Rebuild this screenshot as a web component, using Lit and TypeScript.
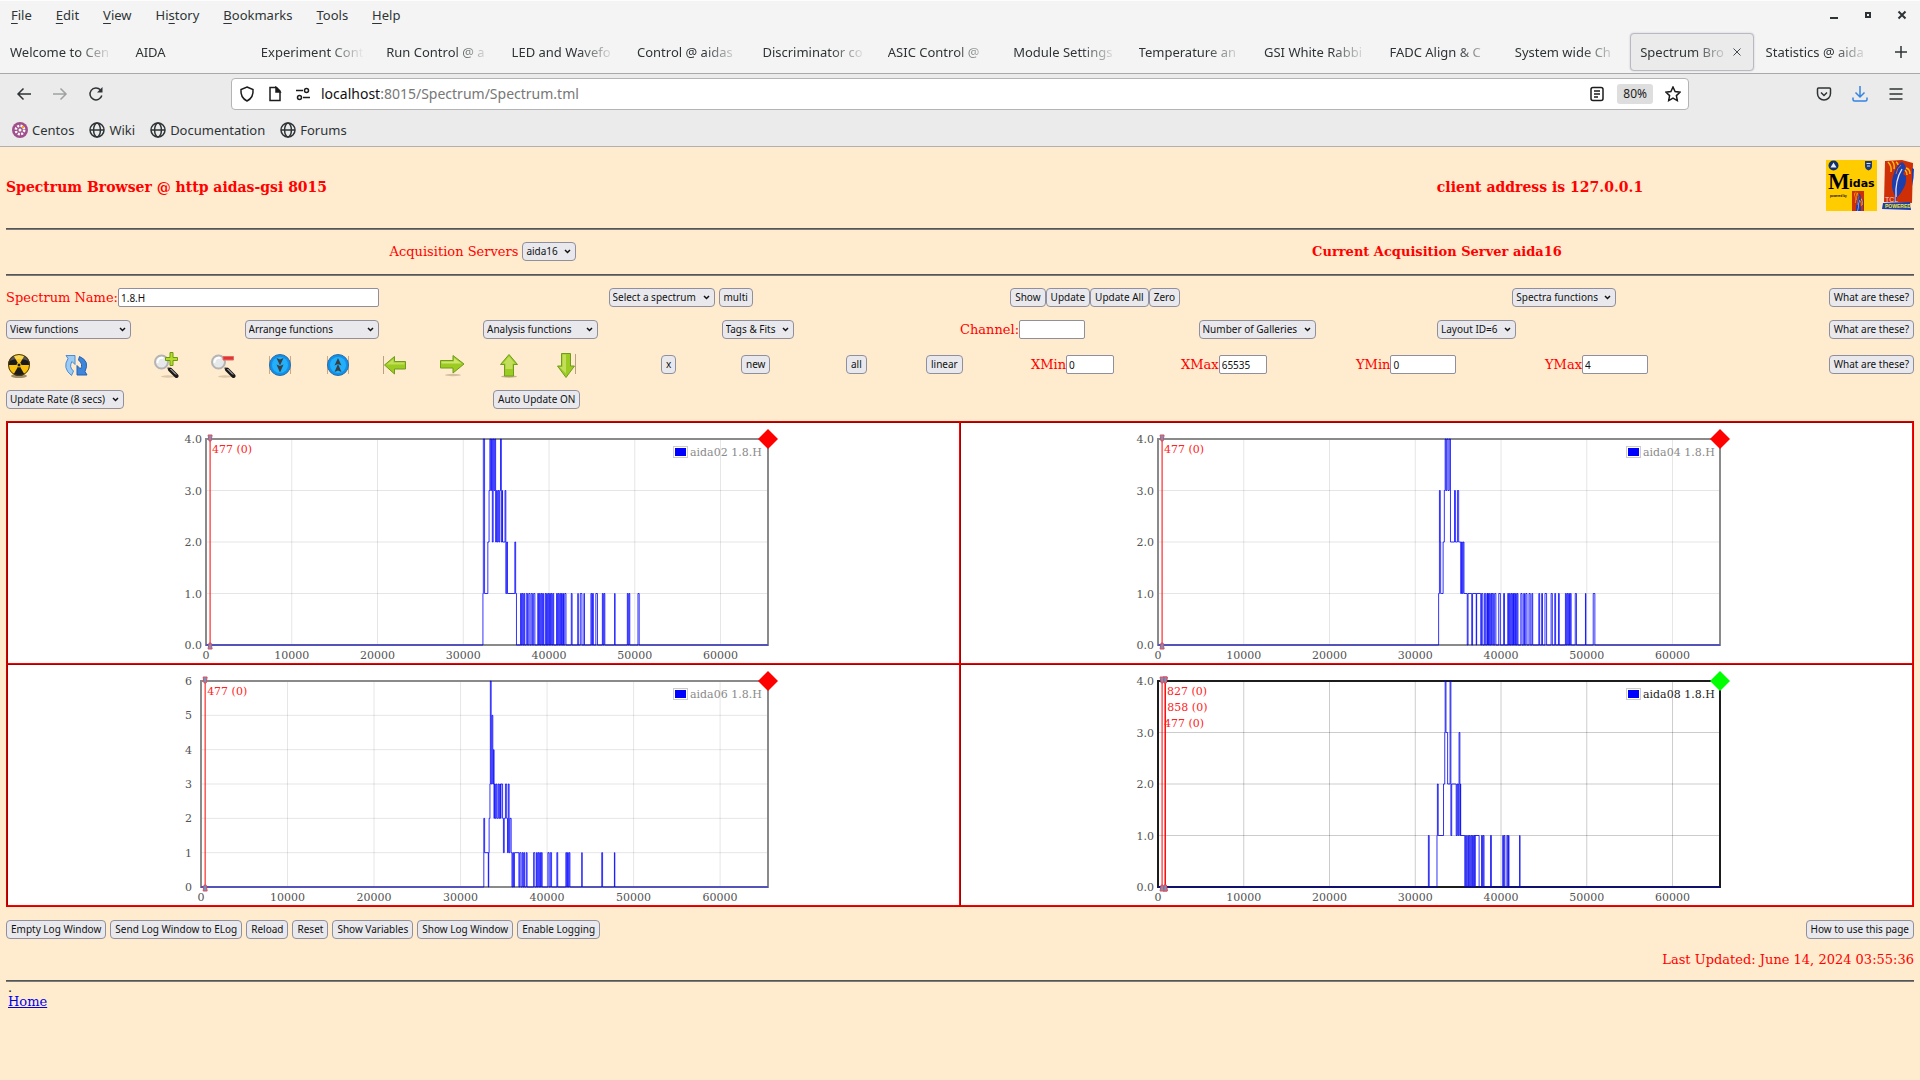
import { LitElement, html, svg, css, nothing } from "lit";
import { customElement, property } from "lit/decorators.js";

/** [bin, level] moves the trace to a level; [from, to, low, high, pitch?] is a burst between two levels. */
type Segment = number[];

interface Spectrum {
  name: string;
  active?: boolean;
  left: number;
  right: number;
  labelGap: number;
  max: number;
  decimals: number;
  firstBin: number;
  binWidth: number;
  cursors: number[];
  segments: Segment[];
}

const hit = (from: number, to: number): Segment[] => [[from, 1], [to, 0]];
const burst = (from: number, to: number, pitch = 2): Segment => [from, to, 0, 1, pitch];

const SPECTRA: Spectrum[] = [
  {
    name: "aida02 1.8.H", left: 38, right: 600, labelGap: 4, max: 4, decimals: 1,
    firstBin: 113, binWidth: 47.7, cursors: [477],
    segments: [
      [790, 1], [791, 4], [794, 1], [802, 2], [805, 3], [807, 4], [809, 3], [811, 4], [813, 2],
      [815, 4], [817, 3], [819, 4], [821, 2], [823, 3], [825, 2], [827, 3], [829, 2], [831, 3],
      [833, 4], [835, 2], [837, 3], [838, 2], [844, 3], [846, 1], [848, 2], [850, 1], [868, 2],
      [870, 1], [872, 0],
      burst(882, 894), burst(896, 905, 3), burst(908, 920, 3), burst(924, 938), burst(942, 947),
      burst(949, 965), burst(970, 976), burst(978, 987), ...hit(990, 993), ...hit(1006, 1008),
      ...hit(1022, 1023), ...hit(1028, 1032), ...hit(1037, 1038), burst(1054, 1060), ...hit(1066, 1070),
      burst(1082, 1089), ...hit(1112, 1113), burst(1143, 1149), ...hit(1169, 1172),
    ],
  },
  {
    name: "aida04 1.8.H", left: 37, right: 599, labelGap: 4, max: 4, decimals: 1,
    firstBin: 94, binWidth: 47.7, cursors: [477],
    segments: [
      [780, 1], [782, 3], [784, 2], [785, 1], [788, 1], [791, 2], [794, 3], [796, 4],
      [798, 3], [800, 4], [803, 3], [806, 4], [809, 2], [819, 3], [821, 2], [826, 3], [829, 2],
      [832, 842, 1, 2, 2], [842, 1], [850, 0], [852, 1], [861, 0], [863, 1], [872, 0], [873, 1],
      [883, 0], [885, 1], [888, 0],
      burst(892, 900, 3), burst(900, 910), burst(911, 921, 3), ...hit(927, 931), ...hit(939, 941),
      burst(949, 963), burst(964, 974), ...hit(981, 984), ...hit(988, 990), ...hit(993, 996),
      ...hit(1001, 1004), ...hit(1008, 1010), burst(1025, 1029), burst(1032, 1036), ...hit(1040, 1044),
      ...hit(1055, 1058), burst(1064, 1068), ...hit(1073, 1075), burst(1090, 1104), ...hit(1114, 1117),
      ...hit(1139, 1140), ...hit(1158, 1162),
    ],
  },
  {
    name: "aida06 1.8.H", left: 33, right: 600, labelGap: 9, max: 6, decimals: 0,
    firstBin: 99, binWidth: 47.17, cursors: [477],
    segments: [
      [792, 2], [794, 1], [803, 0], [804, 1], [805, 2], [807, 3], [808, 6], [810, 3], [812, 5],
      [814, 3], [816, 4], [817, 2], [818, 826, 2, 3, 2], [827, 3], [829, 2], [831, 3], [833, 2],
      [834, 3], [838, 2], [840, 1], [842, 2], [845, 3], [848, 2], [850, 1], [852, 3], [854, 1],
      [856, 2], [859, 1], [861, 0], [863, 1], [865, 0], [867, 1], [878, 0], [880, 1], [883, 0],
      burst(886, 894), ...hit(896, 898), ...hit(914, 917), burst(921, 935), ...hit(949, 952),
      ...hit(955, 958), ...hit(971, 973), burst(993, 1004), ...hit(1032, 1033), ...hit(1081, 1083),
      ...hit(1112, 1113),
    ],
  },
  {
    name: "aida08 1.8.H", active: true, left: 37, right: 599, labelGap: 4, max: 4, decimals: 1,
    firstBin: 94, binWidth: 47.7, cursors: [827, 858, 477],
    segments: [
      [755, 1], [757, 0], [776, 1], [777, 2], [779, 1], [792, 2], [795, 3], [796, 800, 3, 4, 2],
      [802, 2], [808, 4], [810, 1], [812, 2], [823, 1], [825, 2], [827, 1], [829, 2], [830, 3],
      [832, 1], [833, 2], [834, 1], [844, 0], [846, 1], [848, 0],
      burst(851, 869), [869, 1], [879, 0], burst(885, 893), ...hit(907, 909), ...hit(937, 938),
      ...hit(940, 942), burst(947, 952), ...hit(978, 979),
    ],
  },
];

@customElement("spectrum-plot")
class SpectrumPlot extends LitElement {
  @property({ attribute: false }) spectrum!: Spectrum;

  static styles = css`
    :host { display: block; width: 631px; max-width: 100%; }
    svg { display: block; width: 100%; height: auto; }
    text { font: 11px "DejaVu Serif", "Liberation Serif", serif; fill: #545454; }
    .grid { stroke: #000; stroke-opacity: 0.1; stroke-width: 1; }
    .frame { fill: none; stroke: #8a8a8a; stroke-width: 2; }
    .trace { fill: none; stroke: #00f; stroke-opacity: 0.8; stroke-width: 1; }
    .swatch-box { fill: #fff; stroke: #ccc; }
    .swatch { fill: #00f; }
    .cursor { stroke: #f00; stroke-width: 1; }
    .handle { fill: #6a9ac4; stroke: #e04a5e; stroke-width: 1; }
    .cursor-label { fill: #f22; }
    .legend { fill: #8a8a8a; }
    .flag { fill: #f00; }
    .active .grid { stroke-opacity: 0.2; }
    .active .frame { stroke: #1c1c1c; }
    .active .legend { fill: #222; }
    .active .flag { fill: #0f0; }
    .active .trace { stroke: #0000f0; }
  `;

  private readonly top = 16;
  private readonly bottom = 222;

  private x(channel: number) {
    const s = this.spectrum;
    return s.left + (channel / 65535) * (s.right - s.left);
  }

  private y(level: number) {
    return this.bottom - (level / this.spectrum.max) * (this.bottom - this.top);
  }

  private trace() {
    const s = this.spectrum;
    let d = `M${s.left} ${this.bottom}`;
    const step = (bin: number, level: number) => {
      d += `H${this.x((bin - s.firstBin) * s.binWidth).toFixed(2)}V${this.y(level).toFixed(2)}`;
    };
    for (const seg of s.segments) {
      if (seg.length === 2) {
        step(seg[0], seg[1]);
        continue;
      }
      const [from, to, low, high, pitch = 2] = seg;
      let up = true;
      for (let b = from; b < to; b += pitch) {
        step(b, up ? high : low);
        up = !up;
      }
      step(to, low);
    }
    return `${d}H${s.right}`;
  }

  render() {
    const s = this.spectrum;
    const ticksX = [0, 1, 2, 3, 4, 5, 6].map((n) => n * 10000);
    const ticksY = Array.from({ length: s.max + 1 }, (_, n) => n);
    return html`
      <svg viewBox="0 0 631 240" role="img" aria-label=${s.name} class=${s.active ? "active" : "dimmed"}>
        ${ticksX.slice(1).map((v) => svg`<line class="grid" x1=${this.x(v)} x2=${this.x(v)} y1=${this.top} y2=${this.bottom}></line>`)}
        ${ticksY.slice(1, -1).map((v) => svg`<line class="grid" x1=${s.left} x2=${s.right} y1=${this.y(v)} y2=${this.y(v)}></line>`)}
        <rect class="frame" x=${s.left} y=${this.top} width=${s.right - s.left} height=${this.bottom - this.top}></rect>
        <path class="trace" d=${this.trace()}></path>
        ${ticksX.map((v) => svg`<text x=${this.x(v)} y="236" text-anchor="middle">${v}</text>`)}
        ${ticksY.map((v) => svg`<text x=${s.left - s.labelGap} y=${this.y(v) + 4} text-anchor="end">${v.toFixed(s.decimals)}</text>`)}
        ${s.cursors.map((c, i) => {
          const cx = this.x(c);
          return svg`
            <line class="cursor" x1=${cx} x2=${cx} y1=${this.top} y2=${this.bottom}></line>
            <path class="handle" d="M${cx - 2} 12h4l-1 6h-2z"></path>
            <path class="handle" d="M${cx - 2} 226h4l-1 -6h-2z"></path>
            <text class="cursor-label" x=${cx + 2} y=${30 + i * 16}>${c} (0)</text>`;
        })}
        <rect class="swatch-box" x="505.500" y="23.500" width="14" height="11"></rect>
        <rect class="swatch" x="507" y="25" width="11" height="8"></rect>
        <text class="legend" x="522" y="33">${s.name}</text>
        <path class="flag" d="M${s.right} 6l10 10l-10 10l-10 -10z"></path>
      </svg>`;
  }
}

const chromeIcon = (body: unknown, label: string, cls = "") =>
  html`<svg class="glyph ${cls}" viewBox="0 0 16 16" role="img" aria-label=${label}>${body}</svg>`;

const GLYPH = {
  back: svg`<path d="M15 8H2M7.500 2.500L2 8l5.500 5.500"></path>`,
  forward: svg`<path d="M1 8h13M8.500 2.500L14 8l-5.500 5.500"></path>`,
  reload: svg`<path d="M13.800 9.500A6 6 0 1 1 12.400 3.800"></path><path d="M14.500 1v5.500H9z" fill="currentColor" stroke="none"></path>`,
  shield: svg`<path d="M8 1L14 3.500C14.500 8.500 12 13 8 15C4 13 1.500 8.500 2 3.500z"></path>`,
  page: svg`<path d="M3 1.500h6.500L13 5v9.500H3z"></path><path d="M9 1.500V6h4z" fill="currentColor"></path>`,
  perms: svg`<path d="M1 4.500h7M15 11.500H8"></path><circle cx="11.500" cy="4.500" r="2"></circle><circle cx="4.500" cy="11.500" r="2"></circle>`,
  reader: svg`<rect x="2" y="1.500" width="12" height="13" rx="2"></rect><path d="M5 5h6M5 8h6M5 11h4"></path>`,
  star: svg`<path d="M8 1l2.100 4.600 4.900.6-3.600 3.400.9 5L8 12.200l-4.300 2.400.9-5L1 6.200l4.900-.6z"></path>`,
  pocket: svg`<path d="M2.500 2h11q1 0 1 1v4.500a6.500 6.500 0 0 1-13 0V3q0-1 1-1z"></path><path d="M5 6.500l3 3 3-3"></path>`,
  download: svg`<path d="M8 0v10.500M3.500 6.500L8 11l4.500-4.500M1 11.500v2q0 1.500 1.500 1.500h11q1.500 0 1.500-1.500v-2"></path>`,
  menu: svg`<path d="M1.500 3h13M1.500 8h13M1.500 13h13"></path>`,
  close: svg`<path d="M4 4l8 8M12 4l-8 8"></path>`,
  plus: svg`<path d="M8 2v12M2 8h12"></path>`,
  globe: svg`<circle cx="8" cy="8" r="7"></circle><ellipse cx="8" cy="8" rx="3.400" ry="7"></ellipse><path d="M1 8h14"></path>`,
  centos: svg`<circle cx="8" cy="8" r="8" fill="#a14f8c" stroke="none"></circle><circle cx="8" cy="8" r="4.200" stroke="#fff" stroke-width="2.500" stroke-dasharray="2 1.300"></circle><circle cx="8" cy="8" r="1.500" fill="#fff" stroke="none"></circle><circle cx="11" cy="5" r="1.300" fill="#f5a623" stroke="none"></circle>`,
  minimise: svg`<path d="M4 11h8" stroke-width="2"></path>`,
  maximise: svg`<rect x="6" y="6" width="4" height="4" stroke-width="2"></rect>`,
  quit: svg`<path d="M4.500 4.500l7 7M11.500 4.500l-7 7" stroke-width="2"></path>`,
};

const ARROW_FILL = "#9ccb22";
const ARROW_EDGE = "#6f9c1c";

const lens = svg`
  <ellipse cx="15" cy="24.500" rx="7" ry="1.200" fill="#dcc8a6"></ellipse>
  <path d="M14.500 15.500l2.500 2.500" stroke="#8a8a8a" stroke-width="2"></path>
  <path d="M17 17.500l6.500 6.500" stroke="#1a1a1a" stroke-width="4" stroke-linecap="round"></path>
  <path d="M17.500 17l5.500 5.500" stroke="#e4e4e4" stroke-width="1"></path>
  <circle cx="8.500" cy="10" r="6.500" fill="#e6e8ea" stroke="#b4b4b4" stroke-width="2"></circle>
  <path d="M4.500 11a4.500 4.500 0 0 1 6-5" fill="none" stroke="#fff" stroke-width="2"></path>`;

const disc = svg`
  <path d="M2.500 4v18M23.500 4v18" stroke="#c9a98a" stroke-width="1"></path>
  <circle cx="13" cy="13" r="10.500" fill="#128fe8" stroke="#2c6ea8" stroke-width="1"></circle>
  <circle cx="13" cy="13" r="8" fill="#22b0fa"></circle>`;

const TOOLS: { label: string; body: unknown }[] = [
  {
    label: "Clear spectra",
    body: svg`
      <ellipse cx="13" cy="24" rx="8" ry="2" fill="#a08c68"></ellipse>
      <circle cx="13" cy="13" r="11" fill="#f9c00e"></circle>
      <path d="M13 13L7.500 3.500a11 11 0 0 1 11 0z" fill="#f9c81e"></path>
      <path d="M13 13L2 13A11 11 0 0 1 7.500 3.500z" fill="#1b1b1b"></path>
      <path d="M13 13L24 13A11 11 0 0 0 18.500 3.500z" fill="#1b1b1b"></path>
      <path d="M13 13L7.500 22.500a11 11 0 0 0 11 0z" fill="#1b1b1b"></path>
      <path d="M3 9a11 11 0 0 1 20 0q-10 -4 -20 0z" fill="#fff" fill-opacity="0.250"></path>
      <circle cx="13" cy="13" r="2" fill="#1b1b1b" stroke="#f9c00e" stroke-width="1"></circle>
      <circle cx="13" cy="13" r="10.500" fill="none" stroke="#4a3c14" stroke-width="1"></circle>`,
  },
  {
    label: "Refresh",
    body: svg`
      <path d="M8.500 23.500Q-1 16 5 6.500L3 3.500H12V12.500L9 9.500Q5.500 15 10.500 19z" fill="#9ccbf4" stroke="#4b8cd4" stroke-width="1"></path>
      <path d="M16.500 4.500Q27 9 22 19.500L24 23H14V13.500L17.500 17Q20.500 12 15.500 8z" fill="#3d86dc" stroke="#2462b4" stroke-width="1"></path>`,
  },
  { label: "Zoom in", body: svg`${lens}<path d="M17 0.500h3v5h4.500v3H20v5h-3v-5h-4.500v-3H17z" fill="#b4dc28" stroke="#6b9a10" stroke-width="1"></path>` },
  { label: "Zoom out", body: svg`${lens}<path d="M13 4.500h10.500v3.500h-10.500z" fill="#ee2f2f" stroke="#d8706a" stroke-width="1"></path>` },
  { label: "Scroll down", body: svg`${disc}<path d="M9.500 6l3.500 1.500 3.500 -1.500-3.500 7.500zM9.500 12.500l3.500 1.500 3.500 -1.500-3.500 8z" fill="#3a3f44"></path>` },
  { label: "Scroll up", body: svg`${disc}<path d="M9.500 13.500l3.500 -1.500 3.500 1.500-3.500 -7.500zM9.500 20l3.500 -1.500 3.500 1.500-3.500 -8z" fill="#3a3f44"></path>` },
  {
    label: "Left",
    body: svg`
      <path d="M1.500 4v18" stroke="#b9a080" stroke-width="1"></path>
      <path d="M23.500 9.500H12.500V4.500L2.500 13l10 9v-5H23.500z" fill=${ARROW_FILL} stroke=${ARROW_EDGE} stroke-width="1"></path>
      <path d="M22.500 10.500H11.500V7L4.500 12.500H22.500z" fill="#c2de5a"></path>`,
  },
  {
    label: "Right",
    body: svg`
      <ellipse cx="14" cy="23" rx="8" ry="1.200" fill="#d2bf9e"></ellipse>
      <path d="M1.500 8.500h12.500V3.500L25 12l-11 9v-5H1.500z" fill=${ARROW_FILL} stroke=${ARROW_EDGE} stroke-width="1"></path>
      <path d="M2.500 9.500h12.500V6L22.500 11.500H2.500z" fill="#cfe66e"></path>`,
  },
  {
    label: "Up",
    body: svg`
      <ellipse cx="13" cy="24.500" rx="8" ry="1.200" fill="#c2b08e"></ellipse>
      <path d="M8.500 24V12.500H4.500L13 2.500l8.500 10h-4V24z" fill=${ARROW_FILL} stroke=${ARROW_EDGE} stroke-width="1"></path>
      <path d="M9.500 17v-5.500H7L13 4.500l6 7h-2.500V17z" fill="#c2de5a"></path>`,
  },
  {
    label: "Down",
    body: svg`
      <path d="M22.500 2v20" stroke="#b9a080" stroke-width="1"></path>
      <path d="M8.500 1.500V14H4.500l8.500 11.500L21.500 14h-4V1.500z" fill=${ARROW_FILL} stroke=${ARROW_EDGE} stroke-width="1"></path>
      <path d="M9.500 2.500h3.500v19L6.500 15h3z" fill="#c2de5a"></path>`,
  },
];

const feather = svg`
  <path d="M3 1L20 0L31 3L30 43L2 42z" fill="#cf2f06"></path>
  <path d="M12 41L13 36Q8 27 11 16Q14 5 20 2Q25 5 23 11L21 14L24 16Q25 24 20 31Q17 36 15 37L14 42z" fill="#1d3fae"></path>
  <path d="M14 37Q13 20 20 9" fill="none" stroke="#e8e4f4" stroke-width="1.300"></path>
  <path d="M14 14Q15 8 19 5" fill="none" stroke="#d86048" stroke-width="1"></path>
  <path d="M6 2Q10 6 9 12M10 1Q13 4 12 9M14 2Q16 3 16 5M24 8Q28 9 28 14M23 10Q25 12 25 15" fill="none" stroke="#f7b81b" stroke-width="1.500"></path>
  <path d="M30 8L32 9Q32 18 30 26z" fill="#1d3fae"></path>`;

const TABS = [
  "Welcome to Cen", "AIDA", "Experiment Cont", "Run Control @ a", "LED and Wavefo", "Control @ aidas",
  "Discriminator co", "ASIC Control @", "Module Settings", "Temperature an", "GSI White Rabbi",
  "FADC Align & C", "System wide Ch", "Spectrum Bro", "Statistics @ aida",
];
const CURRENT_TAB = 13;

@customElement("app-root")
class AppRoot extends LitElement {
  static styles = css`
    :host {
      display: flex; flex-direction: column; min-height: 100vh; box-sizing: border-box;
      background: #ffebcd; color: #2e3436;
      --ui: "Noto Sans", "Open Sans", sans-serif;
      --page: "DejaVu Serif", "Liberation Serif", serif;
    }
    *, *::before, *::after { box-sizing: border-box; }
    button, input, select { font: inherit; color: inherit; margin: 0; }

    /* browser frame */
    .browser { font: 13px/18px var(--ui); }
    .head { background: #f4f4f4; border-top: 1px solid #fdfdfd; border-bottom: 1px solid #a9a9a9; }
    .menubar { display: flex; align-items: center; height: 28px; padding: 0 10px 0 11px; gap: 24px; }
    .menubar button, .plain { background: none; border: 0; padding: 0; cursor: default; }
    .menubar u { text-underline-offset: 3px; }
    .window-buttons { display: flex; gap: 18px; margin-left: auto; }
    .plain { display: flex; align-items: center; justify-content: center; }
    .tabs { display: grid; grid-template-columns: repeat(15, minmax(0, 1fr)) 39px; height: 44px; padding: 4px 0 2px; }
    .tab { display: flex; align-items: center; margin-right: 2px; padding: 0 9px; border: 1px solid transparent; border-radius: 4px; background: none; text-align: left; }
    .tab-text { flex: 1; min-width: 0; overflow: hidden; white-space: nowrap; mask-image: linear-gradient(to left, transparent, #000 36px); }
    .tab.current { background: #ebebeb; border-color: #b9b9c1; box-shadow: 0 0 2px #c4c4cc; }
    .glyph { width: 16px; height: 16px; display: block; flex: none; fill: none; stroke: currentColor; stroke-width: 1.500; }
    .tab .glyph { width: 14px; height: 14px; stroke-width: 1; }
    .nav { display: flex; align-items: center; height: 40px; background: #ebebeb; }
    .nav-side { display: flex; align-items: center; width: 231px; gap: 20px; padding: 0 16px; }
    .nav-side.end { justify-content: flex-end; }
    .faded { opacity: 0.400; }
    .blue { color: #3584e4; }
    .address { flex: 1; display: flex; align-items: center; height: 32px; padding: 0 7px; border: 1px solid #b4b4b4; border-radius: 4px; background: #fff; gap: 12px; color: #1c1c1c; }
    .url { flex: 1; min-width: 0; margin-left: -2px; font-size: 14px; color: #111; }
    .url span { color: #777; }
    .zoom { height: 20px; padding: 0 6px; border: 0; border-radius: 3px; background: #dedede; font-size: 12px; line-height: 20px; }
    .bookmarks { display: flex; align-items: center; gap: 15px; height: 33px; padding: 0 12px; background: #ebebeb; border-bottom: 1px solid #b0b0b0; }
    .bookmarks a { display: flex; align-items: center; gap: 4px; color: inherit; text-decoration: none; }

    /* page */
    main { padding: 0 6px; font: 13px/15px var(--page); color: #f00; }
    hr { height: 2px; margin: 0; border: 0; border-top: 1px solid #555; background: #7b7b7b; }
    h1, h2 { margin: 0; padding-top: 2px; font-size: 14px; line-height: 18px; font-weight: bold; }
    h3 { margin: 0; font-size: 13px; line-height: 15px; }
    .title { display: grid; grid-template-columns: 24fr 11fr auto; align-items: center; padding: 13px 0 17px; }
    .title h2 { text-align: center; }
    .logos { display: flex; gap: 5px; }
    .logos svg { display: block; height: 51px; }
    .servers { display: grid; grid-template-columns: 1fr 1fr; align-items: center; justify-items: center; height: 44px; padding-bottom: 2px; }
    .field, .group { display: flex; align-items: center; }
    .field.spaced, .group.spaced { gap: 4px; }
    .row { display: grid; align-items: center; justify-items: start; }
    .row > .last { justify-self: end; }
    .row-name { grid-template-columns: 6fr 4fr 5fr 2fr 2fr; height: 31px; margin-top: 6px; }
    .row-functions { grid-template-columns: repeat(8, 1fr); height: 33px; }
    .row-tools { grid-template-columns: 57fr 90fr 57fr 57fr 58fr 57fr 57fr 57fr 57fr 108fr 80fr 105fr 80fr 105fr 150fr 175fr 189fr 184fr 185fr; height: 37px; }
    .row-tools > * { min-width: 0; white-space: nowrap; }
    .row-update { grid-template-columns: 487fr 1421fr; height: 33px; }
    .btn, .box, .pick select { height: 19px; font: 10px/15px var(--ui); color: #111; border: 1px solid #8f8f9d; }
    .btn { padding: 0 4px; border-radius: 4px; background: #e9e9ed; white-space: nowrap; }
    .pick { display: inline-grid; align-items: center; }
    .pick select, .pick svg { grid-area: 1 / 1; }
    .pick select { appearance: none; width: 100%; padding: 0 17px 0 3px; border-radius: 4px; background: #e9e9ed; }
    .pick svg { justify-self: end; width: 7px; height: 5px; margin-right: 5px; fill: none; stroke: #111; stroke-width: 1.500; pointer-events: none; }
    .pick.view { width: 125px; }
    .pick.arrange { width: 134px; }
    .pick.analysis { width: 115px; }
    .box { padding: 0 2px; border-radius: 2px; background: #fff; }
    .box.name { width: 261px; }
    .box.range { width: 48px; }
    .box.value { width: 66px; }
    .tool { width: 26px; height: 26px; }
    .tool svg { width: 26px; height: 26px; display: block; }
    .gallery { display: grid; grid-template-columns: 1fr 1fr; gap: 2px; margin-top: 5px; padding: 2px; background: #d40000; }
    .cell { display: flex; justify-content: center; background: #fff; box-shadow: 0 -1px 0 #a40000, 0 1px 0 #f00, -1px 0 0 #a40000, 1px 0 0 #f00; }
    .log { display: flex; gap: 4px; margin-top: 13px; }
    .log .last { margin-left: auto; }
    .updated { margin: 13px 0 13px; text-align: right; }
    .foot { padding-left: 2px; }
    .dot { margin: 0; line-height: 12px; color: #222; }
    .foot a { color: #00e; }
  `;

  private pick(label: string, cls = "", id = "") {
    return html`<span class="pick ${cls}">
      <select id=${id || nothing} aria-label=${id ? nothing : label}><option>${label}</option></select>
      <svg viewBox="0 0 7 5" aria-hidden="true"><path d="M1 1l2.500 2.500L6 1"></path></svg>
    </span>`;
  }

  private field(label: string, id: string, value: string, cls: string) {
    return html`<span class="field"><label for=${id}>${label}</label><input class="box ${cls}" id=${id} .value=${value} /></span>`;
  }

  private help() {
    return html`<button class="btn last">What are these?</button>`;
  }

  private menuItem(before: string, key: string, after: string) {
    return html`<button>${before}<u>${key}</u>${after}</button>`;
  }

  private button(icon: unknown, label: string, cls = "") {
    return html`<button class="plain ${cls}" aria-label=${label}>${chromeIcon(icon, label)}</button>`;
  }

  private renderBrowser() {
    return html`
      <header class="browser">
        <div class="head">
          <div class="menubar">
            ${this.menuItem("", "F", "ile")}${this.menuItem("", "E", "dit")}${this.menuItem("", "V", "iew")}
            ${this.menuItem("Hi", "s", "tory")}${this.menuItem("", "B", "ookmarks")}${this.menuItem("", "T", "ools")}
            ${this.menuItem("", "H", "elp")}
            <div class="window-buttons">
              ${this.button(GLYPH.minimise, "Minimise")}${this.button(GLYPH.maximise, "Maximise")}${this.button(GLYPH.quit, "Close window")}
            </div>
          </div>
          <nav class="tabs">
            ${TABS.map((t, i) => html`<button class="tab ${i === CURRENT_TAB ? "current" : ""}">
              <span class="tab-text">${t}</span>${i === CURRENT_TAB ? chromeIcon(GLYPH.close, "Close tab") : nothing}
            </button>`)}
            ${this.button(GLYPH.plus, "New tab")}
          </nav>
        </div>
        <div class="nav">
          <div class="nav-side">
            ${this.button(GLYPH.back, "Back")}${this.button(GLYPH.forward, "Forward", "faded")}${this.button(GLYPH.reload, "Reload page")}
          </div>
          <div class="address">
            ${chromeIcon(GLYPH.shield, "Tracking protection")}${chromeIcon(GLYPH.page, "Page information")}${chromeIcon(GLYPH.perms, "Permissions")}
            <div class="url">localhost<span>:8015/Spectrum/Spectrum.tml</span></div>
            ${this.button(GLYPH.reader, "Reader view")}
            <button class="zoom">80%</button>
            ${this.button(GLYPH.star, "Bookmark page")}
          </div>
          <div class="nav-side end">
            ${this.button(GLYPH.pocket, "Pocket")}${this.button(GLYPH.download, "Downloads", "blue")}${this.button(GLYPH.menu, "Menu")}
          </div>
        </div>
        <div class="bookmarks">
          <a href="#centos">${chromeIcon(GLYPH.centos, "")}Centos</a>
          ${["Wiki", "Documentation", "Forums"].map((b) => html`<a href="#${b}">${chromeIcon(GLYPH.globe, "")}${b}</a>`)}
        </div>
      </header>`;
  }

  private renderLogos() {
    return html`<div class="logos">
      <svg viewBox="0 0 51 51" width="51" role="img" aria-label="Midas">
        <rect width="51" height="51" fill="#fc0"></rect>
        <circle cx="7.500" cy="5.500" r="5" fill="#12306e"></circle>
        <path d="M4.500 7.500L7.500 2.500l3 5z" fill="#e8eef4"></path>
        <path d="M39 1h7v5q0 3-3.500 4.500Q39 9 39 6z" fill="#1d3c7c"></path>
        <path d="M40.500 3.500h4M41 6h3" stroke="#dfe6f2" stroke-width="1"></path>
        <text x="2" y="29" font-family="Liberation Serif, serif" font-weight="bold" font-size="23">M</text>
        <text x="23" y="27" font-family="DejaVu Sans, sans-serif" font-weight="bold" font-size="11">idas</text>
        <text x="4" y="37" font-family="Liberation Sans, sans-serif" font-weight="bold" font-size="3">powered by</text>
        <svg x="26" y="31" width="12" height="18" viewBox="0 0 32 51" preserveAspectRatio="none"><rect width="32" height="51" fill="#cf2f06"></rect>${feather}</svg>
      </svg>
      <svg viewBox="0 0 32 51" width="32" role="img" aria-label="Tcl powered">
        ${feather}
        <path d="M1 43L28 42L29 50L0 49z" fill="#1d3fae"></path>
        <text x="3" y="42" font-family="Liberation Sans, sans-serif" font-size="7" fill="#f6dcd0">TCL</text>
        <text x="3" y="48" font-family="Liberation Sans, sans-serif" font-weight="bold" font-size="5" fill="#f8ea2a">POWERED</text>
      </svg>
    </div>`;
  }

  render() {
    return html`
      ${this.renderBrowser()}
      <main>
        <section class="title">
          <h1>Spectrum Browser @ http aidas-gsi 8015</h1>
          <h2>client address is 127.0.0.1</h2>
          ${this.renderLogos()}
        </section>
        <hr />
        <section class="servers">
          <span class="field spaced"><label for="server">Acquisition Servers</label>${this.pick("aida16", "", "server")}</span>
          <h3>Current Acquisition Server aida16</h3>
        </section>
        <hr />
        <section class="row row-name">
          ${this.field("Spectrum Name:", "name", "1.8.H", "name")}
          <span class="group spaced">${this.pick("Select a spectrum")}<button class="btn">multi</button></span>
          <span class="group">${["Show", "Update", "Update All", "Zero"].map((b) => html`<button class="btn">${b}</button>`)}</span>
          ${this.pick("Spectra functions")}
          ${this.help()}
        </section>
        <section class="row row-functions">
          ${this.pick("View functions", "view")}${this.pick("Arrange functions", "arrange")}
          ${this.pick("Analysis functions", "analysis")}${this.pick("Tags & Fits")}
          ${this.field("Channel:", "channel", "", "value")}
          ${this.pick("Number of Galleries")}${this.pick("Layout ID=6")}
          ${this.help()}
        </section>
        <section class="row row-tools">
          ${TOOLS.map((t) => html`<button class="plain tool" aria-label=${t.label}><svg viewBox="0 0 26 26" aria-hidden="true">${t.body}</svg></button>`)}
          ${["x", "new", "all", "linear"].map((b) => html`<button class="btn">${b}</button>`)}
          ${this.field("XMin", "xmin", "0", "range")}${this.field("XMax", "xmax", "65535", "range")}
          ${this.field("YMin", "ymin", "0", "value")}${this.field("YMax", "ymax", "4", "value")}
          ${this.help()}
        </section>
        <section class="row row-update">
          ${this.pick("Update Rate (8 secs)")}
          <button class="btn">Auto Update ON</button>
        </section>
        <section class="gallery">
          ${SPECTRA.map((s) => html`<div class="cell"><spectrum-plot .spectrum=${s}></spectrum-plot></div>`)}
        </section>
        <section class="log">
          ${["Empty Log Window", "Send Log Window to ELog", "Reload", "Reset", "Show Variables", "Show Log Window", "Enable Logging"].map(
            (b) => html`<button class="btn">${b}</button>`,
          )}
          <button class="btn last">How to use this page</button>
        </section>
        <p class="updated">Last Updated: June 14, 2024 03:55:36</p>
        <hr />
        <footer class="foot"><p class="dot">.</p><a href="#home">Home</a></footer>
      </main>`;
  }
}
